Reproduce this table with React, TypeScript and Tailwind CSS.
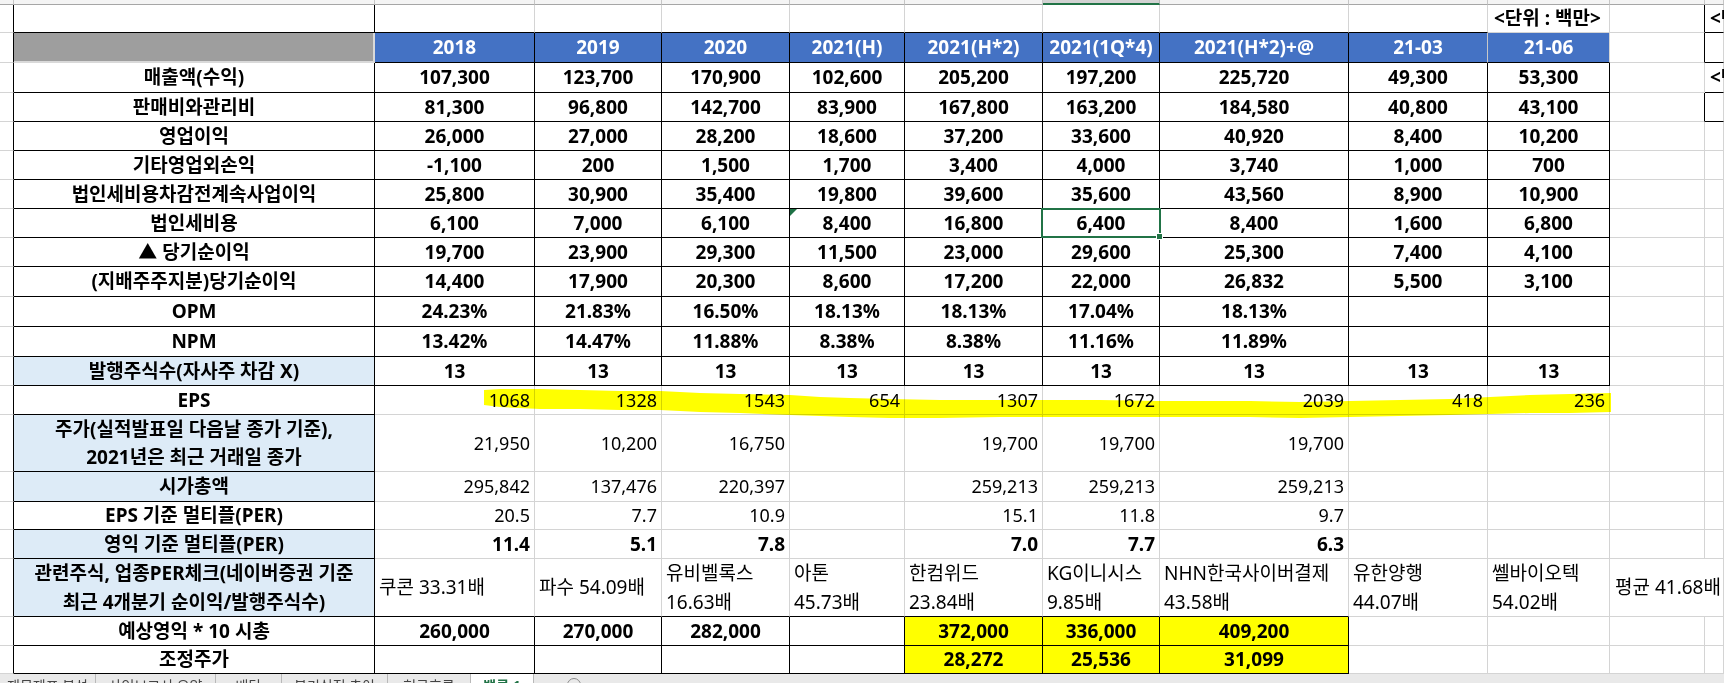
import React from 'react';

const rK = 'border-r border-r-black';
const rG = 'border-r border-r-[#d4d4d4]';
const rL = 'border-r border-r-[#c8c8c8]';
const bK = 'border-b border-b-black';
const bG = 'border-b border-b-[#d4d4d4]';

const BOLD = 'font-bold text-[19px]';
const REG = 'font-normal text-[18px]';
const REL = 'font-normal text-[19px]';

function Cl({ cls, children }: { cls: string; children?: React.ReactNode }) {
  return <div className={`relative flex items-center whitespace-nowrap ${cls}`}>{children}</div>;
}

const topRows: [string, string[]][] = [
  ['매출액(수익)', ['107,300', '123,700', '170,900', '102,600', '205,200', '197,200', '225,720', '49,300', '53,300']],
  ['판매비와관리비', ['81,300', '96,800', '142,700', '83,900', '167,800', '163,200', '184,580', '40,800', '43,100']],
  ['영업이익', ['26,000', '27,000', '28,200', '18,600', '37,200', '33,600', '40,920', '8,400', '10,200']],
  ['기타영업외손익', ['-1,100', '200', '1,500', '1,700', '3,400', '4,000', '3,740', '1,000', '700']],
  ['법인세비용차감전계속사업이익', ['25,800', '30,900', '35,400', '19,800', '39,600', '35,600', '43,560', '8,900', '10,900']],
  ['법인세비용', ['6,100', '7,000', '6,100', '8,400', '16,800', '6,400', '8,400', '1,600', '6,800']],
  ['▲ 당기순이익', ['19,700', '23,900', '29,300', '11,500', '23,000', '29,600', '25,300', '7,400', '4,100']],
  ['(지배주주지분)당기순이익', ['14,400', '17,900', '20,300', '8,600', '17,200', '22,000', '26,832', '5,500', '3,100']],
  ['OPM', ['24.23%', '21.83%', '16.50%', '18.13%', '18.13%', '17.04%', '18.13%', '', '']],
  ['NPM', ['13.42%', '14.47%', '11.88%', '8.38%', '8.38%', '11.16%', '11.89%', '', '']],
  ['발행주식수(자사주 차감 X)', ['13', '13', '13', '13', '13', '13', '13', '13', '13']],
];

const headers = ['2018', '2019', '2020', '2021(H)', '2021(H*2)', '2021(1Q*4)', '2021(H*2)+@', '21-03', '21-06'];

function TwoLine({ a, b, lh }: { a: string; b: string; lh: string }) {
  return (
    <div className={`flex flex-col ${lh}`}>
      <span>{a}</span>
      <span>{b}</span>
    </div>
  );
}

export default function App() {
  const cells: React.ReactNode[] = [];
  let k = 0;
  const add = (cls: string, children?: React.ReactNode) => {
    cells.push(
      <Cl key={k++} cls={cls}>
        {children}
      </Cl>
    );
  };

  // top strip (column headers, cut off)
  for (let c = 0; c < 13; c++) {
    if (c === 7) add('bg-[#d2d2d2] border-r border-r-[#b5b5b5] border-b-2 border-b-[#217346]');
    else add('bg-[#f4f4f4] border-r border-r-[#c6c6c6] border-b border-b-[#a6a6a6]');
  }

  // row 1
  add(`${rK} ${bG}`);
  add(`${rK} ${bK}`);
  for (let c = 2; c <= 9; c++) add(`${rG} ${bK}`);
  add(`${rG} ${bG} justify-start pl-[6px] ${BOLD}`, '<단위 : 백만>');
  add(`${rK} ${bG}`);
  add(`${rG} ${bK} justify-start pl-[5px] ${BOLD}`, '<단위 : 천원>');

  // header
  add(`${rK} ${bG}`);
  add('bg-[#9e9e9e] border-r-2 border-r-[#d9d9d9] border-b-2 border-b-[#d9d9d9]');
  headers.forEach((h, i) => {
    const right = i === 7 ? rL : i === 8 ? rG : rK;
    add(`bg-[#4472c4] text-white justify-center ${BOLD} ${right} ${bK}`, h);
  });
  add(`${rK} ${bG}`);
  add(`${rG} ${bK}`);

  // top table data
  topRows.forEach(([label, vals], i) => {
    add(`${rK} ${bG}`);
    add(`${rK} ${bK} justify-center ${BOLD} ${i === 10 ? 'bg-[#ddebf7]' : 'bg-white'}`, label);
    vals.forEach((v, j) => {
      const col = j + 2;
      let extra: React.ReactNode = null;
      if (i === 5 && col === 5) {
        extra = (
          <span className="absolute left-0 top-0 h-0 w-0 border-t-[7px] border-t-[#1e7145] border-r-[7px] border-r-transparent" />
        );
      }
      if (i === 5 && col === 7) {
        extra = (
          <span className="absolute -left-[2px] -top-[1px] -right-[2px] -bottom-[1px] z-10 border-2 border-[#217346]">
            <span className="absolute -right-[4px] -bottom-[4px] h-[7px] w-[7px] border border-white bg-[#217346]" />
          </span>
        );
      }
      add(
        `${rK} ${bK} justify-center ${BOLD}`,
        <>
          {extra}
          {v}
        </>
      );
    });
    add(`${i === 1 ? rK : rG} ${bG}`);
    add(`${rG} ${i === 0 || i === 1 ? bK : bG} justify-start pl-[5px] ${BOLD}`, i === 0 ? '<단위 : 천원>' : '');
  });

  // EPS row
  const eps = ['1068', '1328', '1543', '654', '1307', '1672', '2039', '418', '236'];
  add(`${rK} ${bG}`);
  add(`${rK} ${bK} justify-center ${BOLD}`, 'EPS');
  eps.forEach((v) => add(`${rG} ${bG} justify-end pr-[4px] ${REG}`, v));
  add(`${rG} ${bG}`);
  add(`${rG} ${bG}`);

  // price row
  const price = ['21,950', '10,200', '16,750', '', '19,700', '19,700', '19,700', '', ''];
  add(`${rK} ${bG}`);
  add(
    `${rK} ${bK} bg-[#ddebf7] justify-center text-center ${BOLD}`,
    <TwoLine a="주가(실적발표일 다음날 종가 기준)," b="2021년은 최근 거래일 종가" lh="leading-[28px]" />
  );
  price.forEach((v) => add(`${rG} ${bG} justify-end pr-[4px] ${REG}`, v));
  add(`${rG} ${bG}`);
  add(`${rG} ${bG}`);

  // market cap
  const cap = ['295,842', '137,476', '220,397', '', '259,213', '259,213', '259,213', '', ''];
  add(`${rK} ${bG}`);
  add(`${rK} ${bK} bg-[#ddebf7] justify-center ${BOLD}`, '시가총액');
  cap.forEach((v) => add(`${rG} ${bG} justify-end pr-[4px] ${REG}`, v));
  add(`${rG} ${bG}`);
  add(`${rG} ${bG}`);

  // EPS PER
  const per = ['20.5', '7.7', '10.9', '', '15.1', '11.8', '9.7', '', ''];
  add(`${rK} ${bG}`);
  add(`${rK} ${bK} justify-center ${BOLD}`, 'EPS 기준 멀티플(PER)');
  per.forEach((v) => add(`${rG} ${bG} justify-end pr-[4px] ${REG}`, v));
  add(`${rG} ${bG}`);
  add(`${rG} ${bG}`);

  // OP PER
  const oper = ['11.4', '5.1', '7.8', '', '7.0', '7.7', '6.3', '', ''];
  add(`${rK} ${bG}`);
  add(`${rK} ${bK} bg-[#ddebf7] justify-center ${BOLD}`, '영익 기준 멀티플(PER)');
  oper.forEach((v) => add(`${rG} ${bG} justify-end pr-[4px] ${BOLD}`, v));
  add(`${rG} ${bG}`);
  add(`${rG} ${bG}`);

  // related stocks
  const rel: (string | [string, string])[] = [
    '쿠콘 33.31배',
    '파수 54.09배',
    ['유비벨록스', '16.63배'],
    ['아톤', '45.73배'],
    ['한컴위드', '23.84배'],
    ['KG이니시스', '9.85배'],
    ['NHN한국사이버결제', '43.58배'],
    ['유한양행', '44.07배'],
    ['쎌바이오텍', '54.02배'],
  ];
  add(`${rK} ${bG}`);
  add(
    `${rK} ${bK} bg-[#ddebf7] justify-center text-center ${BOLD}`,
    <TwoLine a="관련주식, 업종PER체크(네이버증권 기준" b="최근 4개분기 순이익/발행주식수)" lh="leading-[29px]" />
  );
  rel.forEach((v, j) => {
    const col = j + 2;
    const bottom = col <= 8 ? bK : bG;
    add(
      `${rG} ${bottom} justify-start pl-[4px] ${REL}`,
      typeof v === 'string' ? v : <TwoLine a={v[0]} b={v[1]} lh="leading-[29px]" />
    );
  });
  add(`${bG} justify-start pl-[5px] ${REL} z-[1]`, '평균 41.68배');
  add(`${rG} ${bG}`);

  // expected
  const exp = ['260,000', '270,000', '282,000', '', '372,000', '336,000', '409,200'];
  add(`${rK} ${bG}`);
  add(`${rK} ${bK} justify-center ${BOLD}`, '예상영익 * 10 시총');
  exp.forEach((v, j) =>
    add(`${rK} ${bK} justify-center ${BOLD} ${j >= 4 ? 'bg-[#ffff00]' : 'bg-white'}`, v)
  );
  add(`${rG} ${bG}`);
  add(`${rG} ${bG}`);
  add(`${rG} ${bG}`);
  add(`${rG} ${bG}`);

  // adjusted price
  const adj = ['', '', '', '', '28,272', '25,536', '31,099'];
  add(`${rK} ${bG}`);
  add(`${rK} ${bK} justify-center ${BOLD}`, '조정주가');
  adj.forEach((v, j) =>
    add(`${rK} ${bK} justify-center ${BOLD} ${j >= 4 ? 'bg-[#ffff00]' : 'bg-white'}`, v)
  );
  add(`${rG} ${bG}`);
  add(`${rG} ${bG}`);
  add(`${rG} ${bG}`);
  add(`${rG} ${bG}`);

  const tabs = [
    { w: 'w-[96px]', t: '재무제표 분석' },
    { w: 'w-[120px]', t: '사업보고서 요약' },
    { w: 'w-[66px]', t: '배당' },
    { w: 'w-[106px]', t: '분기실적 추이' },
    { w: 'w-[83px]', t: '현금흐름' },
  ];

  const top = 'M484,390 L500,389 L540,389 L580,390 L620,391 L660,391 L700,393 L740,394 L790,395 L820,397 L850,398 L890,399 L940,400 L1000,400 L1100,400 L1160,401 L1250,401 L1300,402 L1350,401 L1400,400 L1450,399 L1490,397 L1530,395 L1570,394 L1611,393';
  const bottom = 'L1611,412 L1570,413 L1530,413 L1490,414 L1450,415 L1400,416 L1350,417 L1300,418 L1250,417 L1160,417 L1100,417 L1000,417 L940,418 L890,418 L850,417 L790,415 L740,413 L700,412 L660,410 L620,410 L580,409 L540,409 L500,407 L484,405 Z';

  return (
    <div className="relative h-[683px] w-[1724px] overflow-hidden bg-white text-black font-['Noto_Sans','Noto_Sans_CJK_KR',sans-serif]">
      <div className="grid grid-cols-[14px_361px_160px_127px_128px_115px_138px_117px_189px_139px_122px_95px_19px] grid-rows-[5px_28px_30px_30px_29px_29px_29px_29px_29px_29px_30px_30px_30px_29px_29px_57px_30px_28px_29px_58px_29px_28px]">
        {cells}
      </div>
      <div className="flex h-[9px] overflow-hidden bg-[#e9e9e9] text-[14px] leading-[24px] text-[#444]">
        {tabs.map((tb) => (
          <div key={tb.t} className={`${tb.w} shrink-0 border-r border-r-[#b9b9b9] text-center`}>
            {tb.t}
          </div>
        ))}
        <div className="w-[63px] shrink-0 border-r border-r-[#b9b9b9] bg-white text-center font-bold text-[#217346]">
          밸류 1
        </div>
        <div className="flex w-[80px] shrink-0 justify-center pt-[4px]">
          <span className="h-[14px] w-[14px] rounded-full border border-[#8a8a8a]" />
        </div>
      </div>
      <svg
        className="pointer-events-none absolute left-0 top-0 mix-blend-multiply"
        width={1724}
        height={683}
        viewBox="0 0 1724 683"
      >
        <path d={`${top} ${bottom}`} fill="#ffff00" />
      </svg>
    </div>
  );
}
